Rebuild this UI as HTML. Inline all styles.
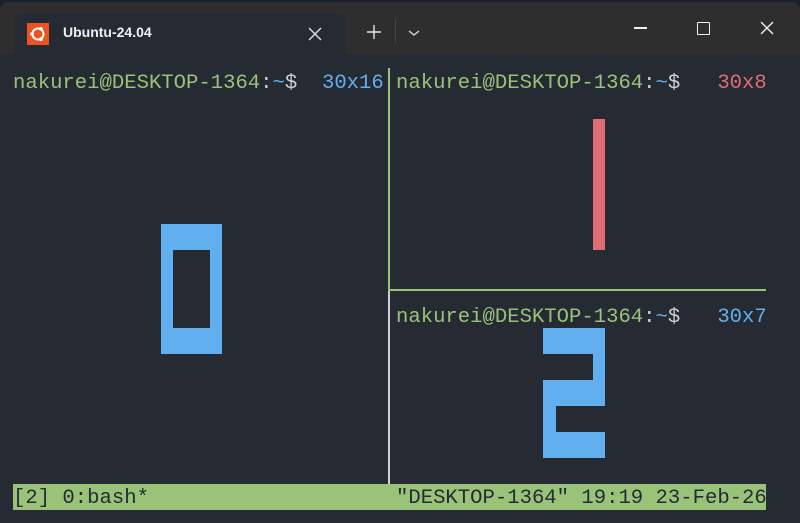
<!DOCTYPE html>
<html><head><meta charset="utf-8"><style>
html,body{margin:0;padding:0;width:800px;height:523px;overflow:hidden;background:#1a2030;}
.win{position:absolute;left:0;top:2px;width:800px;height:521px;background:#262a33;border-radius:8px 8px 0 0;overflow:hidden;}
.tb{position:absolute;left:0;top:0;width:800px;height:52px;background:#2e2e2e;}
.tab{position:absolute;left:15px;top:11px;width:330px;height:41px;background:#262a33;border-radius:8px 8px 0 0;}
.t{position:absolute;font-family:"Liberation Mono",monospace;font-size:20.6px;line-height:26px;white-space:pre;}
.g{color:#98c379}.b{color:#61afef}.w{color:#d0d0d0}.r{color:#e06c75}
.blk{position:absolute;background:#61afef}
</style></head><body>
<div class="win">
<div class="tb"></div>
<div class="tab">
 <div style="position:absolute;left:12px;top:10px;width:22px;height:22px;background:#e95420;"></div>
 <svg style="position:absolute;left:12px;top:10px" width="22" height="22"><circle cx="11" cy="11" r="5.5" fill="none" stroke="#fff" stroke-width="2"/><circle cx="5" cy="11" r="1.8" fill="#fff"/><circle cx="14" cy="5.8" r="1.8" fill="#fff"/><circle cx="14" cy="16.2" r="1.8" fill="#fff"/></svg>
 <div style="position:absolute;left:48px;top:11px;font-family:'Liberation Sans',sans-serif;font-weight:bold;font-size:14px;color:#f0f0f0;">Ubuntu-24.04</div>
 <svg style="position:absolute;left:293px;top:14px" width="14" height="14"><path d="M1 1L13 13M13 1L1 13" stroke="#e0e0e0" stroke-width="1.4"/></svg>
</div>
<svg style="position:absolute;left:366px;top:22px" width="16" height="16"><path d="M8 1V15M1 8H15" stroke="#e8e8e8" stroke-width="1.4"/></svg>
<div style="position:absolute;left:395px;top:17px;width:1px;height:24px;background:#454545"></div>
<svg style="position:absolute;left:408px;top:27px" width="12" height="8"><path d="M1 2L6 6L11 2" stroke="#d8d8d8" stroke-width="1.4" fill="none"/></svg>
<div style="position:absolute;left:634px;top:25px;width:13px;height:1.5px;background:#f0f0f0"></div>
<div style="position:absolute;left:697px;top:20px;width:11px;height:11px;border:1.5px solid #f0f0f0;border-radius:1px"></div>
<svg style="position:absolute;left:760px;top:19px" width="14" height="14"><path d="M1 1L13 13M13 1L1 13" stroke="#f0f0f0" stroke-width="1.4"/></svg>
</div>

<div class="t" style="left:13px;top:71px"><span class="g">nakurei@DESKTOP-1364</span><span class="w">:</span><span class="b">~</span><span class="w">$</span>  <span class="b">30x16</span></div>
<div class="t" style="left:396px;top:71px"><span class="g">nakurei@DESKTOP-1364</span><span class="w">:</span><span class="b">~</span><span class="w">$</span>   <span class="r">30x8</span></div>
<div class="t" style="left:396px;top:305px"><span class="g">nakurei@DESKTOP-1364</span><span class="w">:</span><span class="b">~</span><span class="w">$</span>   <span class="b">30x7</span></div>

<div style="position:absolute;left:388px;top:68px;width:2px;height:222px;background:#98c379"></div>
<div style="position:absolute;left:388px;top:289px;width:378px;height:2px;background:#98c379"></div>
<div style="position:absolute;left:388px;top:291px;width:2px;height:193px;background:#d0d0d8"></div>

<div class="blk" style="left:161px;top:224px;width:61px;height:130px"></div>
<div style="position:absolute;left:173px;top:250px;width:37px;height:78px;background:#262a33"></div>

<div style="position:absolute;left:593px;top:119px;width:12px;height:131px;background:#e06c75"></div>

<div class="blk" style="left:543px;top:328px;width:62px;height:26px"></div>
<div class="blk" style="left:593px;top:354px;width:12px;height:26px"></div>
<div class="blk" style="left:543px;top:380px;width:62px;height:26px"></div>
<div class="blk" style="left:543px;top:406px;width:13px;height:26px"></div>
<div class="blk" style="left:543px;top:432px;width:62px;height:26px"></div>

<div style="position:absolute;left:13px;top:484px;width:753px;height:26px;background:#98c379"></div>
<div class="t" style="left:13px;top:486px;color:#262a33">[2] 0:bash*</div>
<div class="t" style="left:396px;top:486px;color:#262a33">"DESKTOP-1364" 19:19 23-Feb-26</div>
</body></html>
